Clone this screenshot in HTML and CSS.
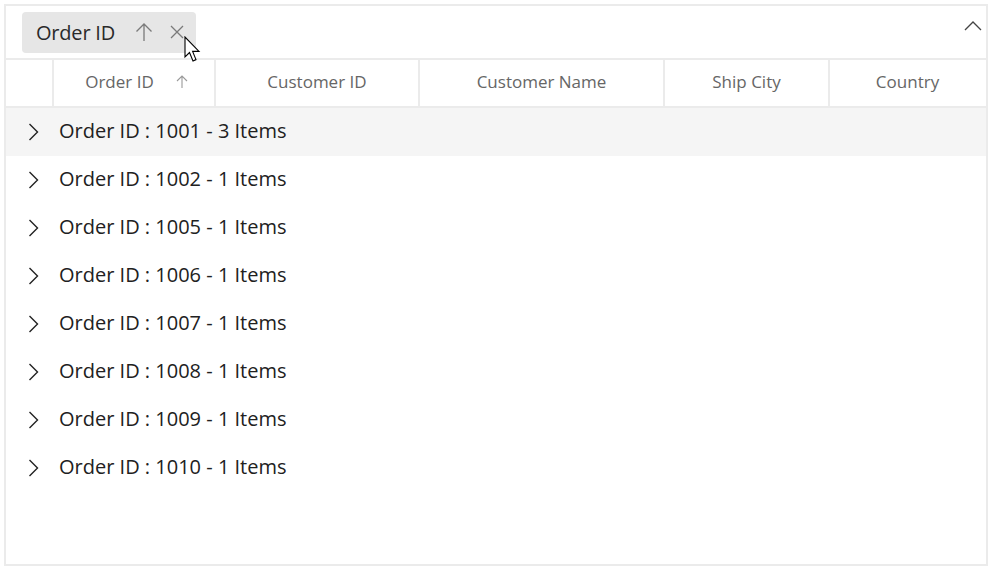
FILE: index.html
```html
<!DOCTYPE html>
<html>
<head>
<meta charset="utf-8">
<link rel="stylesheet" href="styles.css">
</head>
<body>
<div class="grid">
  <div class="groupbar">
    <div class="chip">
      <span class="chip-text">Order ID</span>
      <svg class="chip-sort" width="18" height="20" viewBox="0 0 18 20"><path d="M9 2 V19 M1.5 9.5 L9 2 L16.5 9.5" fill="none" stroke="#7a7a7a" stroke-width="1.3"/></svg>
      <svg class="chip-close" width="14" height="14" viewBox="0 0 14 14"><path d="M1 1 L13 13 M13 1 L1 13" fill="none" stroke="#7a7a7a" stroke-width="1.3"/></svg>
      <svg class="cursor" width="20" height="28" viewBox="0 0 20 28"><path d="M1 1 V21 L5.5 16.5 L9 25 L12 23.6 L8.6 15.4 L15 15.4 Z" fill="#fff" stroke="#000" stroke-width="1.1" stroke-linejoin="miter"/></svg>
    </div>
    <svg class="collapse" width="18" height="11" viewBox="0 0 18 11"><path d="M1 10 L9 2 L17 10" fill="none" stroke="#444" stroke-width="1.3"/></svg>
  </div>
  <div class="header">
    <div class="hcell"></div>
    <div class="hcell sorted">Order ID <svg class="hsort" width="12" height="14" viewBox="0 0 12 14"><path d="M6 1 V13 M1 6 L6 1 L11 6" fill="none" stroke="#9a9a9a" stroke-width="1.1"/></svg></div>
    <div class="hcell">Customer ID</div>
    <div class="hcell">Customer Name</div>
    <div class="hcell">Ship City</div>
    <div class="hcell last">Country</div>
  </div>
  <div class="rows">
    <div class="row hover"><svg class="chev" width="11" height="18" viewBox="0 0 11 18"><path d="M1.5 1 L9.5 9 L1.5 17" fill="none" stroke="#222" stroke-width="1.4"/></svg><span>Order ID : 1001 - 3 Items</span></div>
    <div class="row"><svg class="chev" width="11" height="18" viewBox="0 0 11 18"><path d="M1.5 1 L9.5 9 L1.5 17" fill="none" stroke="#222" stroke-width="1.4"/></svg><span>Order ID : 1002 - 1 Items</span></div>
    <div class="row"><svg class="chev" width="11" height="18" viewBox="0 0 11 18"><path d="M1.5 1 L9.5 9 L1.5 17" fill="none" stroke="#222" stroke-width="1.4"/></svg><span>Order ID : 1005 - 1 Items</span></div>
    <div class="row"><svg class="chev" width="11" height="18" viewBox="0 0 11 18"><path d="M1.5 1 L9.5 9 L1.5 17" fill="none" stroke="#222" stroke-width="1.4"/></svg><span>Order ID : 1006 - 1 Items</span></div>
    <div class="row"><svg class="chev" width="11" height="18" viewBox="0 0 11 18"><path d="M1.5 1 L9.5 9 L1.5 17" fill="none" stroke="#222" stroke-width="1.4"/></svg><span>Order ID : 1007 - 1 Items</span></div>
    <div class="row"><svg class="chev" width="11" height="18" viewBox="0 0 11 18"><path d="M1.5 1 L9.5 9 L1.5 17" fill="none" stroke="#222" stroke-width="1.4"/></svg><span>Order ID : 1008 - 1 Items</span></div>
    <div class="row"><svg class="chev" width="11" height="18" viewBox="0 0 11 18"><path d="M1.5 1 L9.5 9 L1.5 17" fill="none" stroke="#222" stroke-width="1.4"/></svg><span>Order ID : 1009 - 1 Items</span></div>
    <div class="row"><svg class="chev" width="11" height="18" viewBox="0 0 11 18"><path d="M1.5 1 L9.5 9 L1.5 17" fill="none" stroke="#222" stroke-width="1.4"/></svg><span>Order ID : 1010 - 1 Items</span></div>
  </div>
</div>
</body>
</html>
```

FILE: styles.css
```css
* { box-sizing: border-box; }
html, body { margin: 0; padding: 0; background: #fff; }
body {
  font-family: "Segoe UI", "Open Sans", "Noto Sans", sans-serif;
  color: #212121;
}
.grid {
  margin: 4px;
  width: 984px;
  height: 562px;
  border: 2px solid #ebebeb;
  display: flex;
  flex-direction: column;
}
.groupbar {
  height: 52px;
  display: flex;
  align-items: flex-start;
  justify-content: space-between;
  padding: 6px 4px 0 16px;
}
.chip {
  position: relative;
  height: 41px;
  width: 174px;
  background: #e6e6e6;
  border-radius: 4px;
  display: flex;
  align-items: center;
  padding-left: 14px;
  padding-bottom: 1px;
}
.chip-text {
  font-size: 20px;
  color: #2a2a2a;
  letter-spacing: -0.2px;
}
.chip-sort { margin-left: 20px; }
.chip-close { margin-left: 17px; }
.cursor {
  position: absolute;
  left: 162px;
  top: 24px;
}
.collapse { margin-top: 8px; }
.header {
  display: grid;
  grid-template-columns: 48px 162px 204px 245px 165px 155px;
  height: 50px;
  border-top: 2px solid #ebebeb;
  border-bottom: 2px solid #ebebeb;
}
.hcell {
  display: flex;
  align-items: center;
  justify-content: center;
  border-right: 2px solid #ebebeb;
  font-size: 17px;
  color: #666;
  padding-bottom: 3px;
}
.hcell.sorted { padding-left: 5px; }
.hcell.last { border-right: none; }
.hsort { margin-left: 22px; }
.rows { display: flex; flex-direction: column; }
.row {
  height: 48px;
  display: flex;
  align-items: center;
  padding-left: 22px;
  font-size: 20px;
  color: #212121;
}
.row span { position: relative; top: -2px; }
.row.hover { background: #f5f5f5; }
.chev { margin-right: 20px; }
```
